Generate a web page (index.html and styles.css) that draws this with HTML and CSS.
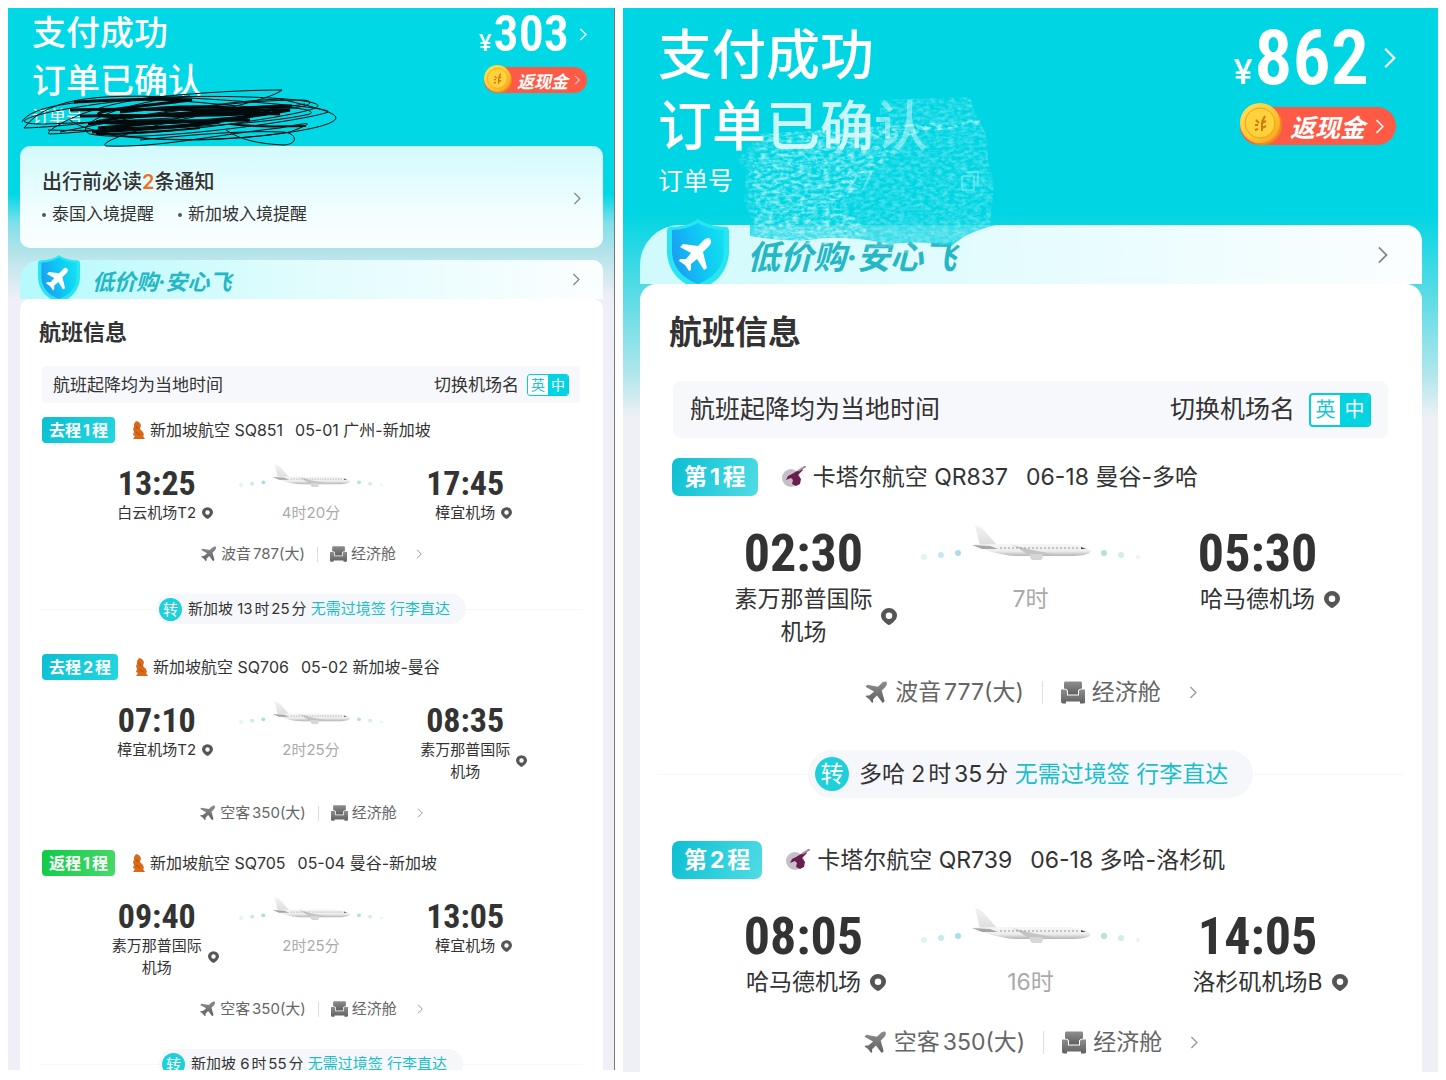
FILE: index.html
```html
<!DOCTYPE html>
<html lang="zh-CN">
  <head>
    <meta charset="utf-8">
    <title>支付成功</title>
    <link rel="stylesheet" href="styles.css">
  </head>
  <body>
    <!-- shared icons -->
    <svg width="0" height="0" class="sprite" aria-hidden="true">
      <defs>
        <linearGradient id="shieldFill" x1="0" y1="0.6" x2="1" y2="0.3">
          <stop offset="0" stop-color="#1c9cf2" />
          <stop offset="0.5" stop-color="#10c4f5" />
          <stop offset="1" stop-color="#12e0f0" />
        </linearGradient>
        <linearGradient id="bodyFill" x1="0" y1="0" x2="0" y2="1">
          <stop offset="0" stop-color="#f6f6f6" />
          <stop offset="0.6" stop-color="#ededed" />
          <stop offset="1" stop-color="#b4b4b4" />
        </linearGradient>
        <linearGradient id="finFill" x1="0" y1="0" x2="0" y2="1">
          <stop offset="0" stop-color="#f4f4f4" />
          <stop offset="1" stop-color="#dcdcdc" />
        </linearGradient>
        <linearGradient id="coinFill" x1="0" y1="0" x2="1" y2="1">
          <stop offset="0" stop-color="#ffe458" />
          <stop offset="0.6" stop-color="#ffc52e" />
          <stop offset="1" stop-color="#f79a1c" />
        </linearGradient>
        <linearGradient id="greyFill" x1="0" y1="0" x2="0" y2="1">
          <stop offset="0" stop-color="#8e8e8e" />
          <stop offset="1" stop-color="#606060" />
        </linearGradient>
        <filter id="grain" x="0" y="0" width="100%" height="100%">
          <feTurbulence type="fractalNoise" baseFrequency="0.16 0.3" numOctaves="4" seed="4" />
          <feColorMatrix values="0 0 0 0 0.72  0 0 0 0 0.97  0 0 0 0 0.98  2.4 0 0 0 -0.85" />
          <feComposite in2="SourceGraphic" operator="in" />
        </filter>
        <filter id="soft" x="-20%" y="-20%" width="140%" height="140%">
          <feGaussianBlur stdDeviation="3" />
        </filter>
      </defs>
      <symbol id="chevron" viewBox="0 0 12 20">
        <path d="M2 1.500 L10.500 10 L2 18.500" fill="none" stroke="currentColor" stroke-width="2" />
      </symbol>
      <symbol id="shield" viewBox="0 0 62 65">
        <path d="M31 0 C36 4 47 8 60 8 C62 9 62 12 62 14 V34 C61 47 55 58 44 65 H19 C7 58 1 47 0 34 V14 C0 11 0 9 2 8 C14 8 25 5 31 0Z" fill="#27e6f2" />
        <path d="M31 4 C38 8 48 11 57 11 V34 C56 47 48 59 31 65 C14 59 6 47 5 34 V11 C14 11 24 8 31 4Z" fill="url(#shieldFill)" />
        <path d="M43 20 C45 22 44 25 42 27 L36 33 L40 49 L37 51 L30 40 L24 45 L24 51 L22 52 L18 46 L12 42 L13 40 L19 40 L24 34 L13 28 L16 25 L31 27 L37 21 C39 19 42 18 43 20Z" fill="#fff" />
      </symbol>
      <symbol id="jet" viewBox="0 0 24 24">
        <path d="M23 1 C24 3 23 5 21 7 L18 10 L21 21 L19 23 L13 15 L9 19 L9 22 L8 23 L5 19 L1 16 L2 15 L5 15 L10 11 L1 6 L3 4 L14 6 L17 3 C19 1 22 0 23 1Z" fill="url(#greyFill)" />
      </symbol>
      <symbol id="seat" viewBox="0 0 24 22">
        <path d="M4 0 H20 Q21 0 21 2 V7 Q18 7 17 9 V13 H7 V9 Q6 7 3 7 V2 Q3 0 4 0Z" fill="url(#greyFill)" />
        <path d="M0 8 H4 Q6 8 6 10 V14 H18 V10 Q18 8 20 8 H24 V21 Q24 22 22 22 H19 V20 H5 V22 H2 Q0 22 0 20Z" fill="url(#greyFill)" />
      </symbol>
      <symbol id="pin" viewBox="0 0 16 17">
        <path fill-rule="evenodd" d="M8 0 A8 7.500 0 0 1 16 7.500 C16 11 13 14 10 16 Q8 18 6 16 C3 14 0 11 0 7.500 A8 7.500 0 0 1 8 0Z M8 4.500 A3.200 3.200 0 1 0 8 11 A3.200 3.200 0 1 0 8 4.500Z" fill="#555" />
      </symbol>
      <symbol id="coin" viewBox="0 0 42 42">
        <circle cx="22" cy="22" r="20" fill="#f08a1c" />
        <circle cx="20" cy="20" r="20" fill="url(#coinFill)" />
        <circle cx="20" cy="20" r="15" fill="#ffd23c" stroke="#e9a11f" stroke-width="1" />
        <path d="M16 17 L19 20 M25 13 L22 19 M15 22 L18 22 M22 20 L26 18 M15 27 L18 26 M22 25 L26 23 M22 19 L22 28" fill="none" stroke="#cf7c12" stroke-width="2" />
      </symbol>
      <symbol id="airliner" viewBox="0 0 220 58">
        <circle cx="4" cy="32" r="3" fill="#e3f3f4" />
        <circle cx="21" cy="30" r="3" fill="#c8e9ec" />
        <circle cx="38" cy="28" r="3" fill="#a9dfe4" />
        <circle cx="184" cy="28" r="3" fill="#b2e3dd" />
        <circle cx="201" cy="30" r="3" fill="#d0eeea" />
        <circle cx="218" cy="32" r="2" fill="#e6f5f3" />
        <path d="M55 0 Q60 1 63 4 L77 20 L60 21Z" fill="url(#finFill)" />
        <path d="M53 19 C65 20 75 19 90 19 H148 C160 20 168 23 171 26 C170 30 161 31 148 31 H96 C78 30 64 25 53 19Z" fill="url(#bodyFill)" />
        <path d="M52 20 L70 21 L78 24 L62 24Z" fill="#a5a5a5" />
        <path d="M85 16 L92 20 L112 25 L133 29 L110 31 L98 23Z" fill="#c4c4c4" />
        <path d="M110 29 H122 Q124 33 121 35 H112 Q109 32 110 29Z" fill="#d6d6d6" />
        <path d="M80 23 H158" stroke="#9a9a9a" stroke-width="1" stroke-dasharray="2 2" />
        <path d="M161 22 L166 24 L161 24Z" fill="#444" />
      </symbol>
      <symbol id="sq" viewBox="0 0 14 18">
        <path d="M5 0 L8 1 L10 4 L9 8 L12 11 L13 14 L12 15 L14 18 H2 L4 15 L2 14 L3 11 L2 8 L3 6 L3 3Z" fill="#d96a1a" />
        <path d="M5 5 L7 8 M5 11 L9 14" stroke="#a64a10" stroke-width="1" />
      </symbol>
      <symbol id="qr" viewBox="0 0 24 22">
        <circle cx="9" cy="12" r="9" fill="#c6bfc8" />
        <path d="M20 3 L15 5 L10 8 L6 10 L4 14 L9 12 L11 14 L10 18 L14 20 L18 18 L19 13 L16 9 L21 4Z" fill="#6b1d4d" />
        <path d="M16 5 L24 0" stroke="#a58ba0" stroke-width="2" />
      </symbol>
    </svg>

    <main class="compare">
      <section class="phone phone-small">
        <header class="header">
          <div class="status">
            <h1>支付成功<br>订单已确认</h1>
            <p class="order">订单号</p>
            <svg class="scribble" viewBox="0 0 320 62" aria-hidden="true">
              <g fill="none" stroke="#050b0c" stroke-width="1">
                <path d="M262 4 C190 4 90 14 30 26 C-4 34 -2 38 24 38 C80 36 200 32 285 18" />
                <path d="M262 4 C250 16 120 44 30 48 C20 48 60 20 130 12 C200 8 300 12 298 20 C296 28 140 50 88 48" />
                <path d="M4 42 C30 8 90 8 170 12 C240 16 312 22 308 26 C290 34 120 58 70 48 C50 40 100 16 170 10" />
                <path d="M4 42 C80 40 180 16 260 13 C290 20 316 26 316 32 C314 44 220 54 170 54 C110 54 60 44 50 34" />
                <path d="M86 60 C140 62 200 48 260 42 C300 34 290 38 270 46 C210 56 120 56 72 46" />
                <path d="M86 60 C76 56 130 38 200 26 C250 18 300 22 290 28 C240 40 90 46 28 44" />
                <path d="M206 44 C220 54 240 58 264 59 C280 58 276 46 262 46 C220 44 160 50 120 54" />
                <path d="M2 36 C10 20 60 14 110 14 C160 12 200 20 250 22 C290 24 300 14 280 14 C200 14 100 34 40 46" />
              </g>
              <g fill="none" stroke="#050b0c" stroke-width="3">
                <path d="M54 16 C90 14 140 12 172 14 C120 20 60 26 84 30 C130 34 210 20 272 20" />
                <path d="M50 24 C100 22 160 24 270 24 C220 34 120 40 76 36 C100 30 180 24 260 28" />
                <path d="M60 30 C120 28 200 32 250 26 C200 38 130 44 78 42 C120 38 180 34 230 34" />
                <path d="M72 46 C110 44 160 42 200 36 C160 34 100 34 68 38 M100 26 C150 20 200 18 240 26" />
                <path d="M76 48 C90 48 140 46 180 42 M210 38 C240 42 260 40 286 40" stroke-width="2" />
              </g>
            </svg>
          </div>
          <div class="paid">
            <a class="price" href="#"><span class="yen">¥</span>303<svg class="arrow"><use href="#chevron" /></svg></a>
            <button type="button" class="cashback"><svg class="coin"><use href="#coin" /></svg>返现金<svg class="arrow"><use href="#chevron" /></svg></button>
          </div>
        </header>

        <a class="notice" href="#">
          <div>
            <h2>出行前必读<b>2</b>条通知</h2>
            <ul>
              <li>泰国入境提醒</li>
              <li>新加坡入境提醒</li>
            </ul>
          </div>
          <svg class="arrow"><use href="#chevron" /></svg>
        </a>

        <a class="banner" href="#">
          <svg class="shield"><use href="#shield" /></svg>
          <span class="slogan">低价购·安心飞</span>
          <svg class="arrow"><use href="#chevron" /></svg>
        </a>

        <div class="card">
          <h2>航班信息</h2>
          <div class="bar">
            <span>航班起降均为当地时间</span>
            <span class="names">切换机场名</span>
            <button type="button" class="lang" aria-label="切换机场名"><span>英</span><span class="on">中</span></button>
          </div>

          <article class="flight">
            <div class="leg">
              <span class="tag">去程1程</span>
              <svg class="logo"><use href="#sq" /></svg>
              <span class="number">新加坡航空 SQ851</span>
              <span>05-01 广州-新加坡</span>
            </div>
            <div class="route">
              <div class="stop"><time>13:25</time><p class="place"><span>白云机场T2</span><svg class="pin"><use href="#pin" /></svg></p></div>
              <div class="stop"><svg class="airliner"><use href="#airliner" /></svg><p class="duration">4时20分</p></div>
              <div class="stop"><time>17:45</time><p class="place"><span>樟宜机场</span><svg class="pin"><use href="#pin" /></svg></p></div>
            </div>
            <a class="plane" href="#"><svg class="icon"><use href="#jet" /></svg><span class="model">波音787(大)</span><svg class="icon"><use href="#seat" /></svg><span>经济舱</span><svg class="arrow"><use href="#chevron" /></svg></a>
          </article>

          <div class="transfer"><p><i>转</i><span>新加坡 13时25分 <em>无需过境签 行李直达</em></span></p></div>

          <article class="flight">
            <div class="leg">
              <span class="tag">去程2程</span>
              <svg class="logo"><use href="#sq" /></svg>
              <span class="number">新加坡航空 SQ706</span>
              <span>05-02 新加坡-曼谷</span>
            </div>
            <div class="route">
              <div class="stop"><time>07:10</time><p class="place"><span>樟宜机场T2</span><svg class="pin"><use href="#pin" /></svg></p></div>
              <div class="stop"><svg class="airliner"><use href="#airliner" /></svg><p class="duration">2时25分</p></div>
              <div class="stop"><time>08:35</time><p class="place"><span>素万那普国际机场</span><svg class="pin"><use href="#pin" /></svg></p></div>
            </div>
            <a class="plane" href="#"><svg class="icon"><use href="#jet" /></svg><span class="model">空客350(大)</span><svg class="icon"><use href="#seat" /></svg><span>经济舱</span><svg class="arrow"><use href="#chevron" /></svg></a>
          </article>

          <article class="flight">
            <div class="leg">
              <span class="tag back">返程1程</span>
              <svg class="logo"><use href="#sq" /></svg>
              <span class="number">新加坡航空 SQ705</span>
              <span>05-04 曼谷-新加坡</span>
            </div>
            <div class="route">
              <div class="stop"><time>09:40</time><p class="place"><span>素万那普国际机场</span><svg class="pin"><use href="#pin" /></svg></p></div>
              <div class="stop"><svg class="airliner"><use href="#airliner" /></svg><p class="duration">2时25分</p></div>
              <div class="stop"><time>13:05</time><p class="place"><span>樟宜机场</span><svg class="pin"><use href="#pin" /></svg></p></div>
            </div>
            <a class="plane" href="#"><svg class="icon"><use href="#jet" /></svg><span class="model">空客350(大)</span><svg class="icon"><use href="#seat" /></svg><span>经济舱</span><svg class="arrow"><use href="#chevron" /></svg></a>
          </article>

          <div class="transfer"><p><i>转</i><span>新加坡 6时55分 <em>无需过境签 行李直达</em></span></p></div>
        </div>
      </section>

      <section class="phone phone-large">
        <header class="header">
          <div class="status">
            <h1>支付成功<br>订单已确认</h1>
            <p class="order">订单号 <span class="rubbed">27</span></p>
            <svg class="smudge" viewBox="0 0 280 180" aria-hidden="true">
              <path d="M42 10 L150 2 L250 6 L262 60 L268 120 L250 134 L20 134 L10 90 L30 60Z" fill="#02d5e3" opacity="0.2" filter="url(#soft)" />
              <path d="M148 0 H206 V64 H148Z" fill="#02d5e3" opacity="0.5" filter="url(#soft)" />
              <path d="M20 131 H266 Q236 138 222 152 Q190 146 160 150 Q110 140 80 146 Q50 148 20 142Z" fill="#13d6e4" opacity="0.8" />
              <g filter="url(#grain)">
                <path d="M150 6 L240 3 L244 16 L250 28 L256 40 L258 66 L264 90 L260 132 L228 146 L180 160 L140 154 L90 150 L20 148 L24 130 L14 108 L16 80 L8 66 L26 44 L90 40 L150 36Z" fill="#fff" opacity="0.35" />
                <path d="M30 54 L110 46 L170 56 L140 80 L110 110 L140 140 L90 152 L24 144 L26 110 L20 80Z" fill="#fff" opacity="0.5" />
                <path d="M30 40 L250 26 L250 30 L160 44 L36 50Z" fill="#fff" opacity="0.6" />
              </g>
              <path d="M236 78 H248 V92 M232 82 H244 V96 H232Z" fill="none" stroke="#8deef3" stroke-width="1" />
            </svg>
          </div>
          <div class="paid">
            <a class="price" href="#"><span class="yen">¥</span>862<svg class="arrow"><use href="#chevron" /></svg></a>
            <button type="button" class="cashback"><svg class="coin"><use href="#coin" /></svg>返现金<svg class="arrow"><use href="#chevron" /></svg></button>
          </div>
        </header>

        <a class="banner" href="#">
          <svg class="shield"><use href="#shield" /></svg>
          <span class="slogan">低价购·安心飞</span>
          <svg class="arrow"><use href="#chevron" /></svg>
        </a>

        <div class="card">
          <h2>航班信息</h2>
          <div class="bar">
            <span>航班起降均为当地时间</span>
            <span class="names">切换机场名</span>
            <button type="button" class="lang" aria-label="切换机场名"><span>英</span><span class="on">中</span></button>
          </div>

          <article class="flight">
            <div class="leg">
              <span class="tag">第1程</span>
              <svg class="logo"><use href="#qr" /></svg>
              <span class="number">卡塔尔航空 QR837</span>
              <span>06-18 曼谷-多哈</span>
            </div>
            <div class="route">
              <div class="stop"><time>02:30</time><p class="place"><span>素万那普国际机场</span><svg class="pin"><use href="#pin" /></svg></p></div>
              <div class="stop"><svg class="airliner"><use href="#airliner" /></svg><p class="duration">7时</p></div>
              <div class="stop"><time>05:30</time><p class="place"><span>哈马德机场</span><svg class="pin"><use href="#pin" /></svg></p></div>
            </div>
            <a class="plane" href="#"><svg class="icon"><use href="#jet" /></svg><span class="model">波音777(大)</span><svg class="icon"><use href="#seat" /></svg><span>经济舱</span><svg class="arrow"><use href="#chevron" /></svg></a>
          </article>

          <div class="transfer"><p><i>转</i><span>多哈 2时35分 <em>无需过境签 行李直达</em></span></p></div>

          <article class="flight">
            <div class="leg">
              <span class="tag">第2程</span>
              <svg class="logo"><use href="#qr" /></svg>
              <span class="number">卡塔尔航空 QR739</span>
              <span>06-18 多哈-洛杉矶</span>
            </div>
            <div class="route">
              <div class="stop"><time>08:05</time><p class="place"><span>哈马德机场</span><svg class="pin"><use href="#pin" /></svg></p></div>
              <div class="stop"><svg class="airliner"><use href="#airliner" /></svg><p class="duration">16时</p></div>
              <div class="stop"><time>14:05</time><p class="place"><span>洛杉矶机场B</span><svg class="pin"><use href="#pin" /></svg></p></div>
            </div>
            <a class="plane" href="#"><svg class="icon"><use href="#jet" /></svg><span class="model">空客350(大)</span><svg class="icon"><use href="#seat" /></svg><span>经济舱</span><svg class="arrow"><use href="#chevron" /></svg></a>
          </article>
        </div>
      </section>
    </main>
  </body>
</html>
```
FILE: styles.css
```css
* {
  box-sizing: border-box;
}
body {
  margin: 0;
  background: #fff;
  color: #333;
  font-family: Inter, "Noto Sans CJK SC", sans-serif;
}
h1,
h2,
p,
ul {
  margin: 0;
  padding: 0;
}
a {
  color: inherit;
  text-decoration: none;
}
button {
  padding: 0;
  border: none;
  background: none;
  font-family: inherit;
  cursor: pointer;
}
.sprite {
  position: absolute;
}
.compare {
  display: grid;
  grid-template-columns: 607fr 815fr;
  gap: 8px;
  height: 100vh;
  padding: 8px;
}
.phone {
  display: flex;
  flex-direction: column;
  min-width: 0;
  overflow: hidden;
}

/* sizes of the two screens */
.phone-small {
  --text: 15px;
  --text-line: 22px;
  --leg: 16px;
  --label: 17px;
  --heading: 22px;
  --heading-line: 32px;
  --title: 34px;
  --title-line: 48px;
  --price: 50px;
  --price-line: 50px;
  --yen: 23px;
  --time: 34px;
  --time-line: 38px;
  --tag: 26px;
  --pill: 30px;
  --round: 23px;
  --gap: 4px;
  --wide: 12px;
  --radius: 10px;
  margin-bottom: 2px;
  border-right: 1px solid #777;
  background: linear-gradient(#00d8e6 186px, #7fe0ea 215px, #b5e3ea 245px, #eeeff7 290px);
}
.phone-large {
  --text: 23px;
  --text-line: 33px;
  --leg: 23px;
  --label: 25px;
  --heading: 33px;
  --heading-line: 46px;
  --title: 54px;
  --title-line: 71px;
  --price: 76px;
  --price-line: 76px;
  --yen: 34px;
  --time: 52px;
  --time-line: 58px;
  --tag: 38px;
  --pill: 48px;
  --round: 34px;
  --gap: 7px;
  --wide: 18px;
  --radius: 16px;
  background: linear-gradient(#00d5e3 205px, #5fdce6 292px, #b5e7ed 370px, #eef0f5 410px);
}

/* header */
.header {
  display: flex;
  flex: none;
  justify-content: space-between;
  color: #fff;
}
.phone-small .header {
  height: 138px;
  padding: 1px 27px 0 24px;
}
.phone-large .header {
  height: 217px;
  padding: 12px 42px 0 35px;
}
.status {
  position: relative;
}
h1 {
  font-size: var(--title);
  line-height: var(--title-line);
  font-weight: 500;
}
.order {
  font-size: var(--label);
  line-height: 39px;
}
.phone-small .order {
  line-height: 24px;
}
.rubbed {
  position: relative;
  z-index: 2;
  margin-left: 104px;
  opacity: 0.3;
}
.scribble {
  position: absolute;
  left: -12px;
  top: 77px;
  width: 320px;
  height: 62px;
}
.smudge {
  position: absolute;
  z-index: 1;
  left: 72px;
  top: 74px;
  width: 280px;
  height: 180px;
}
.paid {
  display: flex;
  flex-direction: column;
  align-items: flex-end;
}
.price {
  display: flex;
  align-items: baseline;
  font-family: "Roboto Condensed", Roboto, sans-serif;
  font-size: var(--price);
  line-height: var(--price-line);
  font-weight: 600;
}
.yen {
  margin-right: 2px;
  font-family: Inter, sans-serif;
  font-size: var(--yen);
  line-height: 1;
  font-weight: 500;
}
.arrow {
  flex: none;
  width: 8px;
  height: 13px;
}
.phone-large .arrow {
  width: 11px;
  height: 18px;
}
.price .arrow {
  align-self: center;
  margin-left: 10px;
}
.phone-large .price .arrow {
  width: 13px;
  height: 22px;
  margin-left: 14px;
}
.cashback {
  display: flex;
  align-items: center;
  height: var(--tag);
  padding-right: 7px;
  border-radius: 20px;
  background: #ff5a46;
  color: #fff;
  font-size: var(--label);
  font-weight: 700;
  font-style: italic;
}
.phone-small .cashback {
  margin-top: 8px;
}
.phone-large .cashback {
  margin-top: 11px;
  padding-right: 12px;
}
.coin {
  width: 28px;
  height: 28px;
  margin: 0 5px 3px 0;
}
.phone-large .coin {
  width: 42px;
  height: 42px;
  margin: 0 8px 4px 0;
}
.cashback .arrow {
  width: 6px;
  height: 10px;
  margin-left: 6px;
}
.phone-large .cashback .arrow {
  width: 9px;
  height: 15px;
  margin-left: 10px;
}

/* travel notices */
.notice {
  display: flex;
  flex: none;
  align-items: center;
  justify-content: space-between;
  margin: 0 11px 12px 12px;
  height: 102px;
  padding: 2px 22px 0;
  border-radius: var(--radius);
  background: linear-gradient(#d3fafd, #f3feff 70%, #fafeff);
  color: #333;
}
.notice h2 {
  font-size: 20px;
  line-height: 32px;
  font-weight: 500;
}
.notice b {
  color: #f0701e;
  font-weight: 600;
}
.notice ul {
  display: flex;
  gap: 24px;
  list-style: none;
  font-size: var(--label);
  line-height: 32px;
}
.notice li::before {
  content: "";
  display: inline-block;
  width: 4px;
  height: 4px;
  margin-right: 6px;
  border-radius: 2px;
  background: #555;
  vertical-align: middle;
}
.notice .arrow,
.banner .arrow {
  color: #888;
}

/* slogan strip */
.banner {
  display: flex;
  flex: none;
  align-items: flex-end;
  margin: 0 11px 0 12px;
  height: 39px;
  padding: 0 23px 0 18px;
  border-radius: 20px 10px 0 0;
  background: linear-gradient(90deg, #b5fafc, #e2fcfd 50%, #fbfeff);
}
.phone-large .banner {
  margin: 0 16px 0 17px;
  height: 59px;
  padding: 0 34px 0 27px;
  border-radius: 40px 16px 0 0;
  background: linear-gradient(90deg, #cffafc, #e6fcfe 50%, #fbfeff);
}
.shield {
  flex: none;
  width: 42px;
  height: 44px;
}
.phone-large .shield {
  width: 62px;
  height: 65px;
}
.slogan {
  flex: 1;
  align-self: center;
  margin-left: 12px;
  color: #25b7c4;
  font-size: var(--heading);
  font-weight: 700;
  font-style: italic;
}
.phone-large .slogan {
  margin-left: 18px;
}
.banner .arrow {
  align-self: center;
}

/* flights */
.card {
  flex: 1 0 auto;
  margin: 0 11px 0 12px;
  padding: 17px 20px 0 19px;
  border-radius: var(--radius) var(--radius) 0 0;
  background: #fff;
}
.phone-large .card {
  margin: 0 16px 0 17px;
  padding: 25px 30px 0 29px;
}
.card h2 {
  font-size: var(--heading);
  line-height: var(--heading-line);
  font-weight: 700;
}
.bar {
  display: flex;
  align-items: center;
  margin: 18px 3px 14px;
  height: 37px;
  padding: 0 11px;
  border-radius: 4px;
  background: #f7f8fb;
  font-size: var(--label);
  line-height: var(--text-line);
}
.phone-large .bar {
  margin: 26px 4px 20px;
  height: 57px;
  padding: 0 17px;
  border-radius: 8px;
}
.names {
  margin: 0 8px 0 auto;
}
.phone-large .names {
  margin-right: 14px;
}
.lang {
  display: flex;
  width: 42px;
  height: 22px;
  border: 1px solid #04cfdd;
  border-radius: 3px;
  overflow: hidden;
  background: #fff;
  color: #1cc5d1;
  font-size: 14px;
  line-height: 20px;
}
.phone-large .lang {
  width: 62px;
  height: 34px;
  border-width: 2px;
  border-radius: 4px;
  font-size: 20px;
  line-height: 30px;
}
.lang span {
  flex: 1;
}
.lang .on {
  background: #04d3e1;
  color: #fff;
}
.flight {
  padding: 0 3px;
  font-size: var(--text);
  line-height: var(--text-line);
}
.flight + .flight {
  margin-top: 26px;
}
.leg {
  display: flex;
  align-items: center;
  height: var(--tag);
  font-size: var(--leg);
}
.tag {
  display: flex;
  align-items: center;
  height: 100%;
  padding: 0 7px;
  border-radius: 4px;
  background: linear-gradient(120deg, #0cbfd2, #22d7e0);
  color: #fff;
  font-weight: 700;
  text-autospace: normal;
}
.phone-large .tag {
  padding: 0 12px;
  border-radius: 7px;
  background: linear-gradient(110deg, #0cbfd2, #4fdce5);
}
.phone-small .tag.back {
  background: linear-gradient(110deg, #0ecb44, #4ad96b);
}
.logo {
  width: 14px;
  height: 18px;
  margin: 0 5px 0 16px;
}
.phone-large .logo {
  width: 24px;
  height: 22px;
  margin: 0 7px 0 24px;
}
.number {
  margin-right: var(--wide);
}
.route {
  display: grid;
  grid-template-columns: repeat(3, 1fr);
  width: 86%;
  margin: 21px auto 19px;
}
.phone-large .route {
  width: 95%;
  margin: 29px auto 27px;
}
.stop {
  display: flex;
  flex-direction: column;
  align-items: center;
}
time {
  font-family: "Roboto Condensed", Roboto, sans-serif;
  font-size: var(--time);
  line-height: var(--time-line);
  font-weight: 700;
}
.place {
  display: grid;
  grid-template-columns: 1fr auto 1fr;
  align-items: center;
  width: 100%;
  text-align: center;
}
.place span {
  grid-column: 2;
  max-width: 6em;
}
.pin {
  width: 11px;
  height: 12px;
  margin-left: 6px;
}
.phone-large .pin {
  width: 16px;
  height: 17px;
  margin-left: 9px;
}
.airliner {
  width: 147px;
  height: var(--time-line);
}
.phone-large .airliner {
  width: 220px;
}
.duration {
  color: #aaa;
}
.plane {
  display: flex;
  align-items: center;
  justify-content: center;
  color: #666;
  text-autospace: normal;
}
.icon {
  width: 17px;
  height: 16px;
  margin-right: var(--gap);
}
.phone-large .icon {
  width: 24px;
  height: 23px;
}
.model {
  display: flex;
  align-items: center;
}
.model::after {
  content: "";
  width: 1px;
  height: 1em;
  margin: 0 var(--wide);
  background: #ddd;
}
.plane .arrow {
  width: 6px;
  height: 10px;
  margin-left: 20px;
  color: #999;
}
.phone-large .plane .arrow {
  width: 8px;
  height: 13px;
  margin-left: 28px;
}
.transfer {
  display: flex;
  align-items: center;
  margin: 29px 0 30px;
  font-size: var(--text);
  line-height: var(--text-line);
}
.phone-large .transfer {
  margin: 41px -12px 43px;
}
.transfer::before,
.transfer::after {
  content: "";
  flex: 1;
  height: 1px;
  background: #f8f8fa;
}
.transfer p {
  display: flex;
  align-items: center;
  gap: 6px;
  height: var(--pill);
  padding: 0 16px 0 3px;
  border-radius: 24px;
  background: #f6f7fb;
  text-autospace: normal;
}
.phone-large .transfer p {
  gap: 10px;
  padding: 0 25px 0 7px;
}
.transfer i {
  width: var(--round);
  border-radius: 50%;
  background: #1fd0da;
  color: #fff;
  font-style: normal;
  line-height: var(--round);
  text-align: center;
}
.transfer em {
  color: #1bbfcb;
  font-style: normal;
}
```
